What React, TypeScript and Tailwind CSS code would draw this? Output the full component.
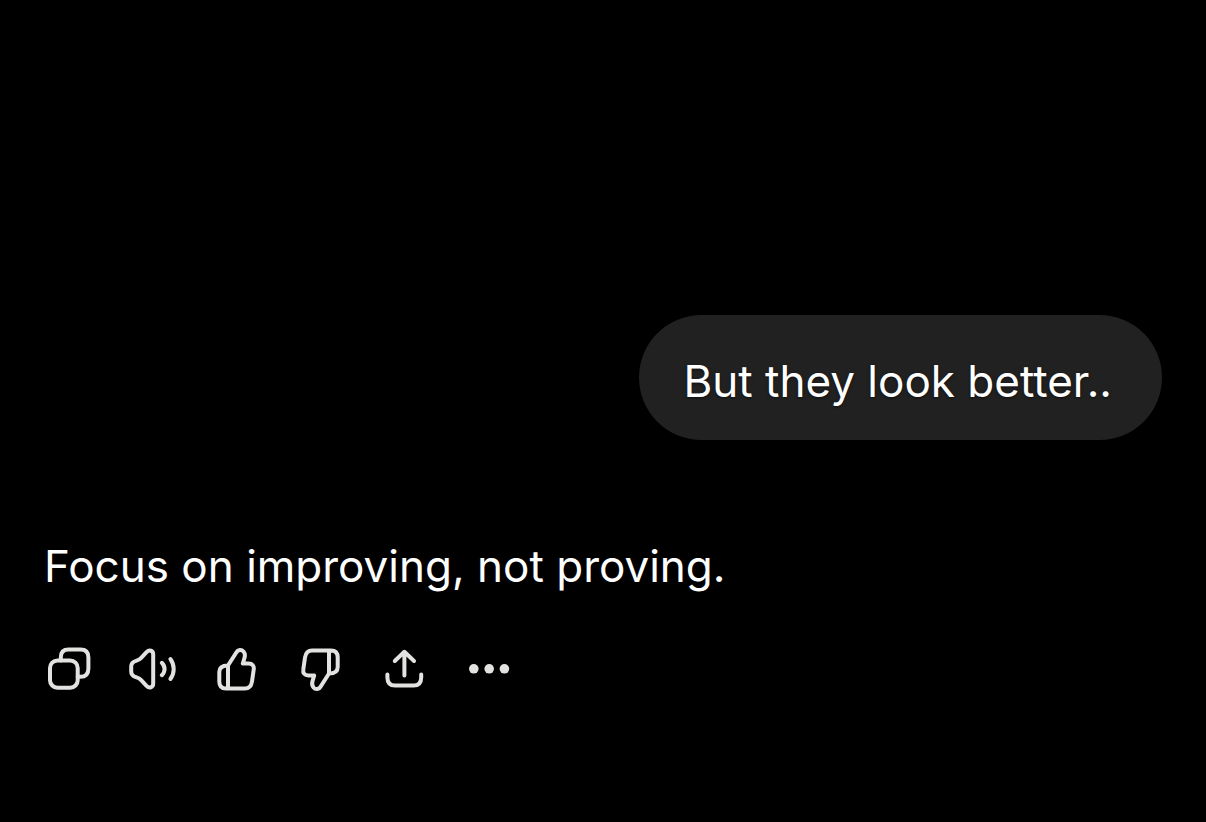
import type { ReactNode } from "react";

function Icon({ children }: { children: ReactNode }) {
  return (
    <svg
      viewBox="0 0 60 60"
      className="size-[60px]"
      fill="none"
      stroke="currentColor"
      strokeWidth="4"
      strokeLinecap="round"
      strokeLinejoin="round"
      aria-hidden="true"
    >
      {children}
    </svg>
  );
}

const thumb =
  "M20 25.5 L28.3 12.5 C30 9.3 33.5 9.2 35.5 11.5 C37 13.3 37.2 15.5 36.5 17.8 L34.8 23.5 H40.5 C44.5 23.5 46.3 26 45.7 29.5 L44 41.5 C43.3 46 41 48.5 37 48.5 H18 C13.5 48.5 11.3 46 11.3 41.5 V32 C11.3 27.5 14 25.5 20 25.5 Z M20 25.5 V48.5";

const actions = [
  {
    label: "Copy",
    icon: (
      <Icon>
        <rect x="10" y="20.5" width="27.7" height="27.2" rx="7.5" />
        <path d="M20.8 20.5 V17.5 C20.8 12 23.5 9.6 28.5 9.6 H40.5 C46 9.6 48.4 12 48.4 17.5 V28.5 C48.4 34 46 36.8 40.5 36.8 H37.7" />
      </Icon>
    ),
  },
  {
    label: "Read aloud",
    icon: (
      <Icon>
        <path d="M29.2 14.5 C29.2 10.5 25.4 9.3 22.5 12.2 L17.2 17.8 C15.8 19.3 14.5 20 12 20.8 C8.6 21.8 7.2 23.5 7.2 26.5 V31.5 C7.2 34.5 8.6 36.2 12 37.2 C14.5 38 15.8 38.7 17.2 40.2 L22.5 45.8 C25.4 48.7 29.2 47.5 29.2 43.5 Z" />
        <path d="M37.8 22.8 C41.5 26.4 41.5 31.6 37.8 35.2" />
        <path d="M46.4 19 C50.8 25 50.8 33 46.4 39" />
      </Icon>
    ),
  },
  {
    label: "Good response",
    icon: (
      <Icon>
        <path d={thumb} />
      </Icon>
    ),
  },
  {
    label: "Bad response",
    icon: (
      <Icon>
        <path d={thumb} transform="rotate(180 28.5 29.5)" />
      </Icon>
    ),
  },
  {
    label: "Share",
    icon: (
      <Icon>
        <path d="M28.4 35.5 V12 M18.8 21 L28.4 11.8 L38 21" />
        <path d="M11.4 34.5 V37.5 C11.4 43 14 45.5 19 45.5 H37.6 C42.6 45.5 45.2 43 45.2 37.5 V34.5" />
      </Icon>
    ),
  },
  {
    label: "More",
    icon: (
      <Icon>
        <g fill="currentColor" stroke="none">
          <circle cx="13.8" cy="28.8" r="4.8" />
          <circle cx="29.2" cy="28.8" r="4.8" />
          <circle cx="44.4" cy="28.8" r="4.8" />
        </g>
      </Icon>
    ),
  },
];

export default function App() {
  return (
    <main className="flex min-h-screen flex-col justify-end bg-black pb-[122px] font-['Inter',sans-serif] text-[44px] leading-[60px] text-white">
      <div className="mr-11 ml-10 max-w-full self-end rounded-full bg-[#212121] pt-9 pr-[50px] pb-[29px] pl-11">
        <p className="text-shadow-[0_1px_3px_rgb(0_0_0/0.6)]">But they look better..</p>
      </div>

      <p className="mt-24 px-11">Focus on improving, not proving.</p>

      <div className="mt-11 flex flex-wrap gap-6 px-10 text-[#e2e2e0]">
        {actions.map((a) => (
          <button key={a.label} type="button" aria-label={a.label}>
            {a.icon}
          </button>
        ))}
      </div>
    </main>
  );
}
